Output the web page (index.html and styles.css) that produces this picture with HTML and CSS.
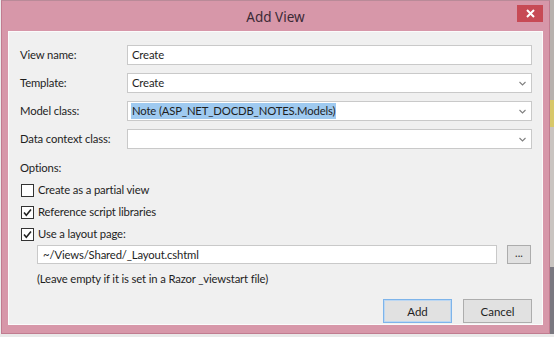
FILE: index.html
```html
<!DOCTYPE html>
<html>
<head>
<meta charset="utf-8">
<link rel="stylesheet" href="styles.css">
</head>
<body>
<div class="desk">
  <div class="window">
    <div class="titlebar">
      <span class="title">Add View</span>
      <span class="close">
        <svg width="9" height="9" viewBox="0 0 9 9"><path d="M1 1 L8 8 M8 1 L1 8" stroke="#fff" stroke-width="2"/></svg>
      </span>
    </div>
    <div class="panel">
      <div class="form">
        <label class="lbl">View name:</label>
        <div class="field"><span class="val">Create</span></div>
        <label class="lbl">Template:</label>
        <div class="field combo"><span class="val">Create</span><span class="chev"><svg width="7" height="5" viewBox="0 0 7 5"><path d="M0.5 1 L3.5 4 L6.5 1" fill="none" stroke="#808080" stroke-width="1.1"/></svg></span></div>
        <label class="lbl">Model class:</label>
        <div class="field combo"><span class="val sel">Note (ASP_NET_DOCDB_NOTES.Models)</span><span class="chev"><svg width="7" height="5" viewBox="0 0 7 5"><path d="M0.5 1 L3.5 4 L6.5 1" fill="none" stroke="#808080" stroke-width="1.1"/></svg></span></div>
        <label class="lbl">Data context class:</label>
        <div class="field combo"><span class="val"></span><span class="chev"><svg width="7" height="5" viewBox="0 0 7 5"><path d="M0.5 1 L3.5 4 L6.5 1" fill="none" stroke="#808080" stroke-width="1.1"/></svg></span></div>
      </div>
      <div class="options">Options:</div>
      <div class="checks">
        <div class="check"><span class="box"></span><span>Create as a partial view</span></div>
        <div class="check"><span class="box"><svg width="11" height="11" viewBox="0 0 11 11"><path d="M2 5.5 L4.3 8.2 L9 2.5" fill="none" stroke="#222" stroke-width="1.6"/></svg></span><span>Reference script libraries</span></div>
        <div class="check"><span class="box"><svg width="11" height="11" viewBox="0 0 11 11"><path d="M2 5.5 L4.3 8.2 L9 2.5" fill="none" stroke="#222" stroke-width="1.6"/></svg></span><span>Use a layout page:</span></div>
      </div>
      <div class="layoutrow">
        <div class="field layout"><span class="val">~/Views/Shared/_Layout.cshtml</span></div>
        <button class="browse">...</button>
      </div>
      <div class="hint">(Leave empty if it is set in a Razor _viewstart file)</div>
      <div class="buttons">
        <button class="btn default">Add</button>
        <button class="btn">Cancel</button>
      </div>
    </div>
  </div>
  <div class="side"></div>
</div>
<div class="under"></div>
</body>
</html>
```
FILE: styles.css
```css
html, body {
  margin: 0;
  padding: 0;
  width: 554px;
  height: 337px;
  overflow: hidden;
  background: #ececec;
  font-family: "Lato", "Noto Sans", sans-serif;
  font-size: 11.3px;
  letter-spacing: -0.15px;
  color: #1e1e1e;
}
.desk {
  display: flex;
  height: 334px;
}
.window {
  width: 549px;
  margin-left: 1px;
  background: #d797a9;
  border: 1px solid #c07c90;
  border-top-color: #b98a98;
  box-sizing: border-box;
  display: flex;
  flex-direction: column;
}
.side {
  flex: 1;
  background: linear-gradient(#b8b2ae 0 30%, #d8c86a 30% 38%, #c9c4c0 38% 80%, #7a7880 80% 100%);
}
.under {
  height: 3px;
  background: #e9e9e9;
}
.titlebar {
  height: 30px;
  position: relative;
  display: flex;
  align-items: center;
  justify-content: center;
  flex: none;
}
.title {
  font-family: "Noto Sans", sans-serif;
  font-size: 13.5px;
  letter-spacing: 0;
  color: #3b2a36;
  margin-top: 1px;
}
.close {
  position: absolute;
  right: 6px;
  top: 4px;
  width: 26px;
  height: 17px;
  background: #c74a55;
  display: flex;
  align-items: center;
  justify-content: center;
}
.panel {
  flex: 1;
  margin: 0 6px 8px 6px;
  background: #f0f0f0;
  border: 1px solid #fbfbfb;
  box-sizing: border-box;
  padding: 13px 10px 0 11px;
  display: flex;
  flex-direction: column;
}
.form {
  display: grid;
  grid-template-columns: 107px 1fr;
  row-gap: 8px;
  align-items: center;
}
.lbl {
  line-height: 20px;
}
.field {
  height: 20px;
  box-sizing: border-box;
  background: #fff;
  border: 1px solid #c9c9c9;
  display: flex;
  align-items: center;
  padding-left: 4px;
}
.val {
  line-height: 16px;
  white-space: nowrap;
}
.sel {
  background: #9fcaf0;
  padding: 0 1px;
  margin-left: -1px;
}
.combo {
  justify-content: space-between;
  padding-right: 5px;
}
.chev {
  display: flex;
  align-items: center;
}
.options {
  margin-top: 11px;
  line-height: 16px;
}
.checks {
  margin-top: 6px;
  display: flex;
  flex-direction: column;
  gap: 6px;
}
.check {
  display: flex;
  align-items: center;
  gap: 4px;
  line-height: 16px;
  margin-left: 1px;
}
.box {
  width: 13px;
  height: 13px;
  box-sizing: border-box;
  border: 1px solid #333;
  background: #fff;
  display: flex;
  align-items: center;
  justify-content: center;
}
.layoutrow {
  display: flex;
  align-items: center;
  margin-top: 3px;
  margin-left: 17px;
  gap: 10px;
}
.layout {
  width: 460px;
  height: 19px;
  padding-left: 5px;
}
.browse {
  width: 24px;
  height: 19px;
  border: 1px solid #acacac;
  background: #e1e1e1;
  font-family: inherit;
  font-size: 11px;
  padding: 0 0 4px 0;
  color: #333;
  line-height: 10px;
}
.hint {
  margin-left: 17px;
  margin-top: 7px;
  line-height: 16px;
}
.buttons {
  margin-top: auto;
  margin-bottom: 1px;
  display: flex;
  justify-content: flex-end;
  gap: 11px;
}
.btn {
  width: 69px;
  height: 24px;
  border: 1px solid #adadad;
  background: #e1e1e1;
  font-family: inherit;
  font-size: 11.5px;
  letter-spacing: 0;
  color: #1e1e1e;
  padding: 0;
}
.btn.default {
  border-color: #7eb4ea;
  box-shadow: inset 0 0 0 1px #bcd7f2;
}
```
